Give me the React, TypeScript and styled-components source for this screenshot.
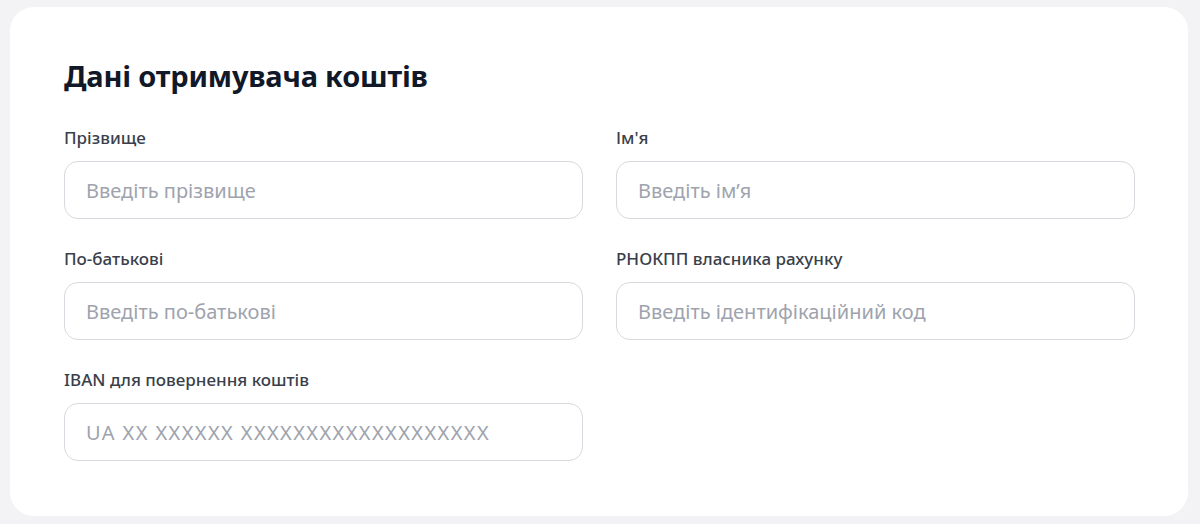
import React from "react";
import styled, { createGlobalStyle } from "styled-components";

const Global = createGlobalStyle`
  html, body { margin: 0; padding: 0; background: #f3f3f5; }
  body { font-family: "Noto Sans", "Open Sans", sans-serif; }
  * { box-sizing: border-box; }
`;

const Page = styled.div`
  padding: 7px 12px 8px 10px;
`;

const Card = styled.section`
  background: #ffffff;
  border-radius: 24px;
  padding: 50px 53px 55px 54px;
`;

const Title = styled.h2`
  margin: 0 0 32px 0;
  font-size: 29px;
  line-height: 38px;
  font-weight: 700;
  color: #111827;
  letter-spacing: -0.2px;
`;

const Grid = styled.div`
  display: grid;
  grid-template-columns: 1fr 1fr;
  column-gap: 33px;
  row-gap: 29px;
`;

const Field = styled.label`
  display: flex;
  flex-direction: column;
  gap: 12px;
`;

const Label = styled.span`
  font-size: 17px;
  line-height: 22px;
  font-weight: 500;
  color: #3a3f4b;
`;

const Input = styled.input<{ $wide?: boolean }>`
  height: 58px;
  width: 100%;
  border: 1px solid #d7d9de;
  border-radius: 14px;
  padding: 0 21px;
  font-family: inherit;
  font-size: 20px;
  color: #111827;
  background: #fff;
  outline: none;
  &::placeholder {
    color: #9ea3ad;
    letter-spacing: ${(p) => (p.$wide ? "1.4px" : "0")};
  }
`;

const fields = [
  { label: "Прізвище", ph: "Введіть прізвище" },
  { label: "Ім'я", ph: "Введіть ім’я" },
  { label: "По-батькові", ph: "Введіть по-батькові" },
  { label: "РНОКПП власника рахунку", ph: "Введіть ідентифікаційний код" },
  { label: "IBAN для повернення коштів", ph: "UA XX XXXXXX XXXXXXXXXXXXXXXXXXX", wide: true },
];

export default function App() {
  return (
    <>
      <Global />
      <Page>
        <Card>
          <Title>Дані отримувача коштів</Title>
          <Grid>
            {fields.map((f) => (
              <Field key={f.label}>
                <Label>{f.label}</Label>
                <Input placeholder={f.ph} $wide={f.wide} />
              </Field>
            ))}
          </Grid>
        </Card>
      </Page>
    </>
  );
}
